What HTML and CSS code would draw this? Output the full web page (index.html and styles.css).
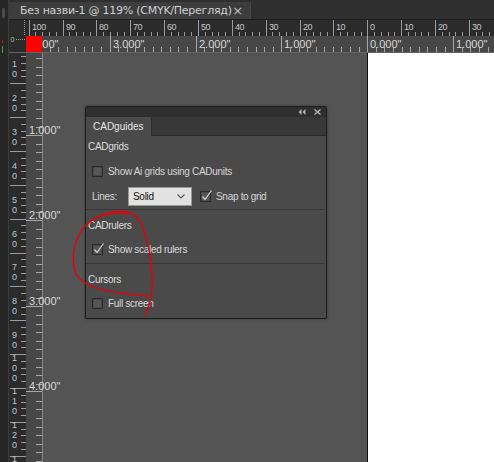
FILE: index.html
```html
<!DOCTYPE html>
<html>
<head>
<meta charset="utf-8">
<link rel="stylesheet" href="styles.css">
</head>
<body>
<div class="app">
  <div class="toolstrip">
    <span class="grip"></span>
    <span class="mark mark-red"></span>
    <span class="mark mark-green"></span>
  </div>
  <div class="doc">
    <div class="tabbar">
      <div class="doctab">
        <span class="doctitle">Без назви-1 @ 119% (CMYK/Перегляд)</span>
        <span class="docclose">×</span>
      </div>
    </div>
    <svg class="hruler" width="485" height="33" viewBox="9 20 485 33">
      <rect x="9" y="20" width="485" height="33" fill="#2b2b2b"/>
      <rect x="26" y="36" width="468" height="16" fill="#474747"/>
      <line x1="9" y1="52.5" x2="494" y2="52.5" stroke="#636363"/>
      <line x1="24.5" y1="20" x2="24.5" y2="36" stroke="#9a9a9a" stroke-dasharray="1 1"/>
      <line x1="16" y1="39.5" x2="26" y2="39.5" stroke="#9a9a9a" stroke-dasharray="1 1"/>
      <text class="rl-tiny" x="10.5" y="42">0</text>
      <path stroke="#9c9c9c" fill="none" d="M29.5 20v16M63.5 20v16M96.5 20v16M130.5 20v16M164.5 20v16M198.5 20v16M232.5 20v16M266.5 20v16M300.5 20v16M333.5 20v16M367.5 20v16M401.5 20v16M435.5 20v16M469.5 20v16"/>
      <path stroke="#9c9c9c" fill="none" d="M35.5 32v4M42.5 32v4M49.5 32v4M56.5 32v4M69.5 32v4M76.5 32v4M83.5 32v4M90.5 32v4M103.5 32v4M110.5 32v4M117.5 32v4M124.5 32v4M137.5 32v4M144.5 32v4M151.5 32v4M157.5 32v4M171.5 32v4M178.5 32v4M184.5 32v4M191.5 32v4M205.5 32v4M212.5 32v4M218.5 32v4M225.5 32v4M239.5 32v4M245.5 32v4M252.5 32v4M259.5 32v4M272.5 32v4M279.5 32v4M286.5 32v4M293.5 32v4M306.5 32v4M313.5 32v4M320.5 32v4M327.5 32v4M340.5 32v4M347.5 32v4M354.5 32v4M361.5 32v4M374.5 32v4M381.5 32v4M388.5 32v4M394.5 32v4M408.5 32v4M415.5 32v4M421.5 32v4M428.5 32v4M442.5 32v4M449.5 32v4M455.5 32v4M462.5 32v4M476.5 32v4M482.5 32v4M489.5 32v4"/>
      <g class="rl-mm">
        <text x="32" y="29.5">100</text>
        <text x="66" y="29.5">90</text>
        <text x="99" y="29.5">80</text>
        <text x="133" y="29.5">70</text>
        <text x="167" y="29.5">60</text>
        <text x="201" y="29.5">50</text>
        <text x="235" y="29.5">40</text>
        <text x="269" y="29.5">30</text>
        <text x="303" y="29.5">20</text>
        <text x="336" y="29.5">10</text>
        <text x="370" y="29.5">0</text>
        <text x="404" y="29.5">10</text>
        <text x="438" y="29.5">20</text>
        <text x="472" y="29.5">30</text>
      </g>
      <path stroke="#a8a8a8" fill="none" d="M110.5 36v16M196.5 36v16M281.5 36v16M367.5 36v16M453.5 36v16"/>
      <path stroke="#a8a8a8" fill="none" d="M50.5 47v5M58.5 47v5M67.5 47v5M75.5 47v5M84.5 47v5M92.5 47v5M101.5 47v5M118.5 47v5M127.5 47v5M135.5 47v5M144.5 47v5M153.5 47v5M161.5 47v5M170.5 47v5M178.5 47v5M187.5 47v5M204.5 47v5M213.5 47v5M221.5 47v5M230.5 47v5M238.5 47v5M247.5 47v5M256.5 47v5M264.5 47v5M273.5 47v5M290.5 47v5M299.5 47v5M307.5 47v5M316.5 47v5M324.5 47v5M333.5 47v5M341.5 47v5M350.5 47v5M359.5 47v5M376.5 47v5M384.5 47v5M393.5 47v5M402.5 47v5M410.5 47v5M419.5 47v5M427.5 47v5M436.5 47v5M445.5 47v5M462.5 47v5M470.5 47v5M479.5 47v5M488.5 47v5"/>
      <g class="rl-in">
        <text x="27" y="48">4.000"</text>
        <text x="113" y="48">3.000"</text>
        <text x="199" y="48">2.000"</text>
        <text x="284" y="48">1.000"</text>
        <text x="370" y="48">0.000"</text>
        <text x="456" y="48">1.000"</text>
      </g>
      <rect x="26" y="36" width="16" height="16" fill="#ff0000"/>
    </svg>
    <div class="work">
      <svg class="vruler" width="34" height="409" viewBox="9 53 34 409">
        <rect x="9" y="53" width="17" height="409" fill="#2b2b2b"/>
        <rect x="26" y="53" width="16" height="409" fill="#474747"/>
        <line x1="42.5" y1="53" x2="42.5" y2="462" stroke="#8a8a8a"/>
        <path stroke="#9c9c9c" fill="none" d="M10 83.5h16M10 117.5h16M10 151.5h16M10 185.5h16M10 219.5h16M10 253.5h16M10 286.5h16M10 320.5h16M10 354.5h16M10 388.5h16M10 422.5h16M10 456.5h16"/>
        <path stroke="#9c9c9c" fill="none" d="M21 56.5h5M21 63.5h5M21 70.5h5M21 76.5h5M21 90.5h5M21 97.5h5M21 104.5h5M21 110.5h5M21 124.5h5M21 131.5h5M21 137.5h5M21 144.5h5M21 158.5h5M21 165.5h5M21 171.5h5M21 178.5h5M21 192.5h5M21 198.5h5M21 205.5h5M21 212.5h5M21 225.5h5M21 232.5h5M21 239.5h5M21 246.5h5M21 259.5h5M21 266.5h5M21 273.5h5M21 280.5h5M21 293.5h5M21 300.5h5M21 307.5h5M21 314.5h5M21 327.5h5M21 334.5h5M21 341.5h5M21 347.5h5M21 361.5h5M21 368.5h5M21 374.5h5M21 381.5h5M21 395.5h5M21 402.5h5M21 408.5h5M21 415.5h5M21 429.5h5M21 435.5h5M21 442.5h5M21 449.5h5"/>
        <g class="rl-vmm">
          <text x="14.5" y="67">1</text><text x="14.5" y="77">0</text>
          <text x="14.5" y="101">2</text><text x="14.5" y="111">0</text>
          <text x="14.5" y="135">3</text><text x="14.5" y="145">0</text>
          <text x="14.5" y="169">4</text><text x="14.5" y="179">0</text>
          <text x="14.5" y="203">5</text><text x="14.5" y="213">0</text>
          <text x="14.5" y="237">6</text><text x="14.5" y="247">0</text>
          <text x="14.5" y="270">7</text><text x="14.5" y="280">0</text>
          <text x="14.5" y="304">8</text><text x="14.5" y="314">0</text>
          <text x="14.5" y="338">9</text><text x="14.5" y="348">0</text>
          <text x="14.5" y="361">1</text><text x="14.5" y="371">0</text><text x="14.5" y="381">0</text>
          <text x="14.5" y="394">1</text><text x="14.5" y="404">1</text><text x="14.5" y="414">0</text>
          <text x="14.5" y="428">1</text><text x="14.5" y="438">2</text><text x="14.5" y="448">0</text>
          <text x="14.5" y="462">1</text>
        </g>
        <path stroke="#a8a8a8" fill="none" d="M26 135.5h16M26 220.5h16M26 306.5h16M26 391.5h16"/>
        <path stroke="#a8a8a8" fill="none" d="M36 58.5h6M36 67.5h6M36 75.5h6M36 84.5h6M36 92.5h6M36 101.5h6M36 109.5h6M36 118.5h6M36 127.5h6M36 144.5h6M36 152.5h6M36 161.5h6M36 169.5h6M36 178.5h6M36 187.5h6M36 195.5h6M36 204.5h6M36 212.5h6M36 229.5h6M36 238.5h6M36 247.5h6M36 255.5h6M36 264.5h6M36 272.5h6M36 281.5h6M36 289.5h6M36 298.5h6M36 315.5h6M36 324.5h6M36 332.5h6M36 341.5h6M36 349.5h6M36 358.5h6M36 367.5h6M36 375.5h6M36 384.5h6M36 401.5h6M36 409.5h6M36 418.5h6M36 427.5h6M36 435.5h6M36 444.5h6M36 452.5h6M36 461.5h6"/>
        <g class="rl-in">
          <text x="29" y="133.5">1.000"</text>
          <text x="29" y="218.5">2.000"</text>
          <text x="29" y="304.5">3.000"</text>
          <text x="29" y="389.5">4.000"</text>
        </g>
      </svg>
      <div class="canvas">
        <div class="page"></div>
        <div class="panel">
          <div class="ptitle">
            <svg class="picon" width="8" height="6" viewBox="0 0 8 6"><path d="M3.5 0L0.5 3L3.5 6ZM7.5 0L4.5 3L7.5 6Z" fill="#b4b4b4"/></svg>
            <svg class="picon" width="7" height="6" viewBox="0 0 7 6"><path d="M0.5 0.5L6.5 5.5M6.5 0.5L0.5 5.5" stroke="#b4b4b4" stroke-width="1.4"/></svg>
          </div>
          <div class="ptabs">
            <div class="ptab">CADguides</div>
          </div>
          <div class="pbody">
            <div class="section s-first">
              <div class="shead">CADgrids</div>
              <div class="row">
                <span class="cb"></span>
                <span class="cblabel">Show Ai grids using CADunits</span>
              </div>
              <div class="row row-lines">
                <span class="lbl">Lines:</span>
                <span class="select">
                  <span class="seltext">Solid</span>
                  <svg class="chev" width="8" height="5" viewBox="0 0 8 5"><path d="M0.5 0.5L4 4L7.5 0.5" fill="none" stroke="#555" stroke-width="1.1"/></svg>
                </span>
                <span class="cb cb-on"><svg width="13" height="13" viewBox="0 0 13 13"><path d="M2.5 6.5L5 9.5L11.5 0.5" fill="none" stroke="#d2d2d2" stroke-width="1.2"/></svg></span>
                <span class="cblabel">Snap to grid</span>
              </div>
            </div>
            <div class="section">
              <div class="shead">CADrulers</div>
              <div class="row">
                <span class="cb cb-on"><svg width="13" height="13" viewBox="0 0 13 13"><path d="M2.5 6.5L5 9.5L11.5 0.5" fill="none" stroke="#d2d2d2" stroke-width="1.2"/></svg></span>
                <span class="cblabel">Show scaled rulers</span>
              </div>
            </div>
            <div class="section s-last">
              <div class="shead">Cursors</div>
              <div class="row">
                <span class="cb"></span>
                <span class="cblabel">Full screen</span>
              </div>
            </div>
          </div>
        </div>
        <svg class="scribble" width="451" height="409" viewBox="43 53 451 409">
          <path d="M98 218C110 210 128 209 137 217C146 229 151 254 152 277C153 293 150 306 145 316" fill="none" stroke="#e8000a" stroke-width="1.4" stroke-linecap="round"/>
          <path d="M128 214C110 211 91 216 81 231C73 244 71 261 76 274C83 287 102 292 148 296" fill="none" stroke="#e8000a" stroke-width="1.4" stroke-linecap="round"/>
        </svg>
      </div>
    </div>
  </div>
</div>
</body>
</html>
```

FILE: styles.css
```css
html, body {
  margin: 0;
  padding: 0;
  background: #535353;
}
body {
  font-family: "Liberation Sans", Arial, sans-serif;
  overflow: hidden;
}
.app {
  display: flex;
  width: 494px;
  height: 462px;
  overflow: hidden;
}
.toolstrip {
  width: 8px;
  flex: none;
  background: #262626;
  border-right: 1px solid #3b3b3b;
  display: flex;
  flex-direction: column;
  align-items: flex-start;
}
.grip {
  width: 3px;
  height: 10px;
  margin: 8px 0 0 2px;
  background: #4a4a4a;
  border-radius: 1px;
}
.mark {
  width: 1px;
  margin-left: 2px;
}
.mark-red {
  height: 3px;
  margin-top: 22px;
  background: #d01c1c;
}
.mark-green {
  height: 7px;
  margin-top: 3px;
  background: #3aa646;
}
.doc {
  flex: 1;
  display: flex;
  flex-direction: column;
  min-width: 0;
}
.tabbar {
  height: 19px;
  flex: none;
  background: #2f2f2f;
  border-bottom: 1px solid #1e1e1e;
  display: flex;
  align-items: flex-end;
}
.doctab {
  width: 242px;
  height: 17px;
  box-sizing: border-box;
  background: #3d3d3d;
  border-right: 1px solid #474747;
  padding: 0 7px 0 11px;
  display: flex;
  align-items: center;
  justify-content: space-between;
  color: #cfcfcf;
  font-family: "DejaVu Sans", "Liberation Sans", sans-serif;
  font-size: 11px;
  letter-spacing: -0.25px;
}
.doctitle {
  white-space: nowrap;
}
.docclose {
  font-size: 13px;
  color: #bdbdbd;
  line-height: 1;
}
.hruler {
  display: block;
  flex: none;
}
.rl-mm text {
  font-family: "Liberation Sans", Arial, sans-serif;
  font-size: 9px;
  letter-spacing: -0.4px;
  fill: #c6c6c6;
}
.rl-in text {
  font-family: "Liberation Sans", Arial, sans-serif;
  font-size: 11px;
  fill: #d8d8d8;
}
.rl-tiny {
  font-family: "Liberation Sans", Arial, sans-serif;
  font-size: 7px;
  fill: #bbbbbb;
}
.rl-vmm text {
  font-family: "Liberation Sans", Arial, sans-serif;
  font-size: 9px;
  fill: #c6c6c6;
  text-anchor: middle;
}
.work {
  flex: 1;
  display: flex;
  min-height: 0;
}
.vruler {
  display: block;
  flex: none;
  overflow: visible;
  position: relative;
  z-index: 1;
}
.canvas {
  flex: 1;
  position: relative;
  background: #545454;
  padding-left: 324px;
  display: flex;
}
.page {
  flex: 1;
  background: #ffffff;
  border-left: 1px solid #111111;
}
.panel {
  position: absolute;
  left: 42px;
  top: 53px;
  width: 242px;
  height: 213px;
  box-sizing: border-box;
  border: 1px solid #1d1d1d;
  border-radius: 2px 2px 0 0;
  box-shadow: 0 0 3px rgba(0, 0, 0, 0.35);
  background: #4a4a4a;
  display: flex;
  flex-direction: column;
  font-size: 10px;
  letter-spacing: -0.3px;
  color: #d6d6d6;
}
.ptitle {
  height: 10px;
  flex: none;
  background: #2f2f2f;
  display: flex;
  align-items: center;
  justify-content: flex-end;
  gap: 8px;
  padding-right: 5px;
}
.picon {
  display: block;
}
.ptabs {
  height: 18px;
  flex: none;
  background: #383838;
  border-bottom: 1px solid #2c2c2c;
  display: flex;
}
.ptab {
  width: 66px;
  height: 19px;
  box-sizing: border-box;
  background: #4a4a4a;
  border-right: 1px solid #2c2c2c;
  padding-left: 7px;
  display: flex;
  align-items: center;
  color: #e4e4e4;
  letter-spacing: 0;
}
.pbody {
  flex: 1;
  display: flex;
  flex-direction: column;
  padding-left: 0;
}
.section {
  display: flex;
  flex-direction: column;
  margin-right: 2px;
  padding-top: 10px;
  padding-bottom: 8px;
  border-bottom: 1px solid #383838;
}
.section.s-first {
  padding-top: 5px;
  padding-bottom: 3px;
}
.section.s-last {
  border-bottom: 0;
}
.shead {
  height: 12px;
  line-height: 12px;
  padding-left: 2px;
  color: #dadada;
}
.row {
  display: flex;
  align-items: center;
  height: 12px;
  margin-top: 11px;
  padding-left: 6px;
}
.s-first .row {
  margin-top: 12px;
}
.s-first .row-lines {
  height: 19px;
  margin-top: 10px;
}
.cb {
  width: 11px;
  height: 11px;
  box-sizing: border-box;
  flex: none;
  border: 1px solid #2a2a2a;
  background: #565656;
  box-shadow: inset 0 0 0 1px #474747;
  position: relative;
}
.cb svg {
  position: absolute;
  left: -1px;
  top: -2px;
}
.cblabel {
  margin-left: 5px;
  white-space: nowrap;
  color: #d6d6d6;
}
.lbl {
  width: 36px;
  flex: none;
}
.select {
  width: 64px;
  height: 19px;
  box-sizing: border-box;
  flex: none;
  background: #e2e2e2;
  border: 1px solid #9a9a9a;
  display: flex;
  align-items: center;
  justify-content: space-between;
  padding: 0 6px 0 4px;
  color: #141414;
  margin-right: 8px;
}
.chev {
  display: block;
}
.scribble {
  position: absolute;
  left: 0;
  top: 0;
  pointer-events: none;
}
```
